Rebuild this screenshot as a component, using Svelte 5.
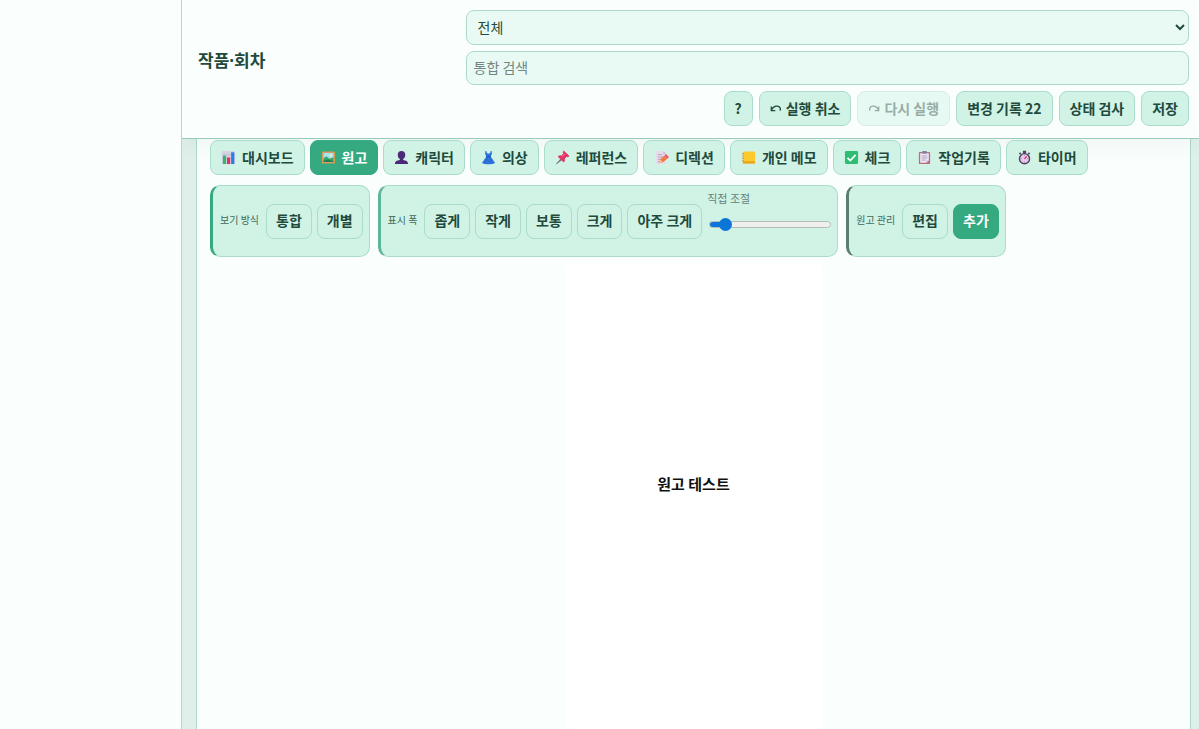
<script lang="ts">
  let work = $state('all')
  let query = $state('')
  let activeTab = $state('manuscript')
  let zoom = $state(8)

  const tabs = [
    { id: 'dashboard', label: '대시보드' },
    { id: 'manuscript', label: '원고' },
    { id: 'character', label: '캐릭터' },
    { id: 'costume', label: '의상' },
    { id: 'reference', label: '레퍼런스' },
    { id: 'direction', label: '디렉션' },
    { id: 'memo', label: '개인 메모' },
    { id: 'check', label: '체크' },
    { id: 'log', label: '작업기록' },
    { id: 'timer', label: '타이머' }
  ]
  const sizes = ['좁게', '작게', '보통', '크게', '아주 크게']
</script>

{#snippet icon(id: string)}
  <svg class="icon" viewBox="0 0 16 16" aria-hidden="true">
    {#if id === 'dashboard'}
      <rect x="1" y="1" width="14" height="14" rx="1" fill="#d5d2e4" />
      <path d="M1 5h14M1 9h14" stroke="#b5b0ca" stroke-width=".6" />
      <rect x="2" y="6" width="3.4" height="9" fill="#35b56d" />
      <rect x="6.4" y="8" width="3.4" height="7" fill="#e5305f" />
      <rect x="10.8" y="2.500" width="3.4" height="12.500" fill="#2a7fd8" />
    {:else if id === 'manuscript'}
      <rect x="1" y="1.500" width="14" height="13" rx="1" fill="#d99a52" />
      <rect x="2.6" y="3.1" width="10.8" height="9.8" fill="#a5e3f2" />
      <circle cx="10.5" cy="5.6" r="1.2" fill="#fff3a0" />
      <path d="M2.6 9l3-2.4L9 9.2l4.4-1.4v5.1H2.6z" fill="#35a866" />
      <path d="M2.6 11.5l5-1.5 5.8 2v.9H2.6z" fill="#1f7f54" />
    {:else if id === 'character'}
      <path d="M8 1c2.6 0 4 1.7 4 4.2 0 2-.9 3.5-2.2 4.3v1.1c3 .4 5.200 1.3 5.200 4.400H1c0-3.100 2.200-4 5.200-4.400V9.500C4.900 8.700 4 7.200 4 5.200 4 2.700 5.400 1 8 1z" fill="#4b2a78" />
    {:else if id === 'costume'}
      <path d="M4.600 1l1 .1.700 2.200 1.700.8 1.700-.8.700-2.200 1-.1.200 3.300-1.300 2.500 4.700 7c-1.200 1-4.500 1.500-7 1.500s-5.800-.5-7-1.500l4.700-7-1.300-2.500z" fill="#2f74dc" />
      <path d="M5.600 7h4.800" stroke="#174da5" />
      <path d="M6.500 8l-2 6M9.500 8l2 6" stroke="#2561c4" stroke-width=".7" />
    {:else if id === 'reference'}
      <path d="M6.400 9.200L1.200 15l6.300-4.600z" fill="#6d6677" stroke="#6d6677" stroke-width=".6" />
      <path d="M9.300 1l5.700 5.500c-.9.900-1.900.8-2.600.4l-2.200 2.300c.3 1.500 0 2.800-.9 3.500L3.200 7c.9-.9 2.300-1 3.700-.7l2.200-2.400C8.600 3 8.500 1.900 9.300 1z" fill="#e33264" stroke="#e33264" stroke-width=".8" />
      <path d="M8 7l2.500-2.500" stroke="#ff7d9d" />
    {:else if id === 'direction'}
      <path d="M2 1h8l3 3v11H2z" fill="#e8dcec" />
      <path d="M10 1v3h3" fill="#c6b7d1" />
      <path d="M4 5h5M4 7.500h6M4 10h4M4 12.500h4" stroke="#a691b8" stroke-width=".8" />
      <path d="M5.500 14l1-4 5-4.500L14.500 9l-5 4z" fill="#f27a42" />
      <path d="M11.500 5.500l1.300-1.200 3 3.400-1.300 1.300z" fill="#e5466c" />
      <path d="M5.500 14l1-4 3 3z" fill="#ffc28a" />
    {:else if id === 'memo'}
      <rect x="2" y="1.500" width="13" height="13" rx="1" fill="#fcca2c" />
      <path d="M2 12h13v1.500a1 1 0 0 1-1 1H3a1 1 0 0 1-1-1z" fill="#e6a41c" />
      <path d="M1 4h2M1 6.500h2M1 9h2M1 11.500h2" stroke="#a8844c" stroke-width=".8" />
    {:else if id === 'check'}
      <rect x="1" y="1" width="14" height="14" rx="1.500" fill="#2fbd73" />
      <path d="M3.700 8.300l3 3 5.700-6" fill="none" stroke="#fff" stroke-width="1.900" />
    {:else if id === 'log'}
      <rect x="2" y="2" width="12" height="13" rx="1" fill="#b66f83" />
      <path d="M3.400 3.500h9.200v7.700l-2.700 2.500H3.400z" fill="#efe7f4" />
      <rect x="5.500" y="1" width="5" height="3" rx=".7" fill="#8b829b" />
      <path d="M5 6.300h6M5 8.500h6M5 10.700h4" stroke="#9a85af" stroke-width=".8" />
      <path d="M9.900 13.700v-2.500h2.700z" fill="#c7b6d4" />
    {:else}
      <path d="M6.300.8h3.400v3H6.300zM11.400 3.800l1.300-1.300 1.300 1.300-1.300 1.300zM2 3.800l1.300-1.300 1.300 1.300-1.300 1.300z" fill="#51425f" />
      <circle cx="8" cy="9.300" r="5.400" fill="#e6c9ef" stroke="#51425f" stroke-width="1.500" />
      <path d="M8 9.300l2.500-2.500" stroke="#d62f5b" stroke-width="1.300" />
      <path d="M8 5.200v1M8 12.500v1M3.900 9.300h1M11.100 9.300h1" stroke="#79658a" stroke-width=".7" />
    {/if}
  </svg>
{/snippet}

{#snippet arrow(flip: boolean)}
  <svg class="arrow" class:flip viewBox="0 0 12 12" aria-hidden="true">
    <path d="M2 7.500C3.200 3.800 8.800 2.800 10.300 6.200c.4 1 .1 1.700-.6 2.300" fill="none" stroke="currentColor" stroke-width="1.300" />
    <path d="M1.300 4.600v4h4" fill="none" stroke="currentColor" stroke-width="1.300" />
  </svg>
{/snippet}

<div class="app">
  <aside class="sidebar"></aside>
  <div class="workspace">
    <header class="topbar">
      <h1>작품·회차</h1>
      <div class="controls">
        <select aria-label="작품 선택" bind:value={work}>
          <option value="all">전체</option>
        </select>
        <input type="search" placeholder="통합 검색" aria-label="통합 검색" bind:value={query} />
        <div class="actions">
          <button>?</button>
          <button>{@render arrow(false)}실행 취소</button>
          <button disabled>{@render arrow(true)}다시 실행</button>
          <button>변경 기록 22</button>
          <button>상태 검사</button>
          <button>저장</button>
        </div>
      </div>
    </header>

    <main class="panel">
      <nav class="tabs">
        {#each tabs as tab}
          <button class:active={activeTab === tab.id} onclick={() => (activeTab = tab.id)}>
            {@render icon(tab.id)}{tab.label}
          </button>
        {/each}
      </nav>

      <div class="toolbar">
        <section class="group view">
          <span class="name">보기 방식</span>
          <button>통합</button>
          <button>개별</button>
        </section>
        <section class="group width">
          <span class="name">표시 폭</span>
          {#each sizes as size}
            <button>{size}</button>
          {/each}
          <label class="slider">
            직접 조절
            <input type="range" min="0" max="100" bind:value={zoom} style="--fill: {zoom}%" />
          </label>
        </section>
        <section class="group manage">
          <span class="name">원고 관리</span>
          <button>편집</button>
          <button class="active">추가</button>
        </section>
      </div>

      <article class="page">
        <p>원고 테스트</p>
      </article>
    </main>
  </div>
</div>

<style>
  :global(body) {
    margin: 0;
    background: #fafffe;
  }

  .app {
    display: flex;
    min-height: 100vh;
    color: #1f4a3c;
    font: 14px/20px "Noto Sans CJK KR", sans-serif;
  }

  .app * {
    box-sizing: border-box;
  }

  .sidebar {
    position: relative;
    z-index: 1;
    flex: 0 0 182px;
    border-right: 1px solid #b4d8cc;
    background: #fafffe;
  }

  .workspace {
    flex: 1;
    min-width: 0;
    display: flex;
    flex-direction: column;
    background: #dff0ea;
  }

  .topbar {
    position: relative;
    display: grid;
    grid-template-columns: 27% 1fr;
    align-items: center;
    padding: 10px 10px 12px 16px;
    background: #fafffe;
    border-bottom: 1px solid #98cbbb;
    box-shadow: 0 6px 20px rgba(20, 60, 45, 0.05);
  }

  h1 {
    margin: 0;
    padding-bottom: 14px;
    font-family: "Noto Sans", "Noto Sans CJK KR", sans-serif;
    font-size: 17px;
    line-height: 24px;
  }

  .controls {
    display: grid;
    gap: 6px;
    min-width: 0;
  }

  select,
  input[type='search'] {
    width: 100%;
    height: 35px;
    margin: 0;
    padding: 0 7px 2px;
    border: 1px solid #add9cb;
    border-radius: 8px;
    background: #e9faf5;
    color: #1f4a3c;
    font: inherit;
    outline: none;
  }

  input[type='search'] {
    height: 34px;
    -webkit-appearance: none;
    appearance: none;
  }

  input::placeholder {
    color: #74857f;
  }

  .actions {
    display: flex;
    flex-wrap: wrap;
    justify-content: flex-end;
    gap: 6px;
  }

  button {
    display: inline-flex;
    align-items: center;
    justify-content: center;
    min-height: 35px;
    padding: 0 10px 2px;
    border: 1px solid #a9dccb;
    border-radius: 8px;
    background: #d0f3e6;
    color: #1f4a3c;
    font: inherit;
    font-weight: 700;
    white-space: nowrap;
  }

  button:disabled {
    opacity: 0.45;
  }

  button.active {
    border-color: #35a980;
    background: #35a980;
    color: #fff;
  }

  .arrow {
    width: 12px;
    height: 12px;
    margin-right: 4px;
  }

  .arrow.flip {
    transform: scaleX(-1);
  }

  .panel {
    flex: 1;
    display: flex;
    flex-direction: column;
    margin: 0 8px 0 14px;
    padding: 1px 13px 0;
    border: 1px solid #add9cb;
    border-width: 0 1px;
    background: #fafffe;
  }

  .tabs {
    display: flex;
    flex-wrap: wrap;
    gap: 5px;
    position: relative;
  }

  .icon {
    width: 15px;
    height: 15px;
    margin: 2px 6px 0 0;
  }

  .toolbar {
    display: flex;
    flex-wrap: wrap;
    gap: 8px;
    margin-top: 10px;
  }

  .group {
    display: flex;
    align-items: center;
    gap: 5px;
    min-height: 72px;
    padding: 6px;
    border: 1px solid #a9dccb;
    border-left: 3px solid #35a980;
    border-radius: 10px;
    background: #d0f3e6;
  }

  .group.width {
    border-left-color: #5cb698;
  }

  .group.manage {
    border-left-color: #5a7f72;
  }

  .group button {
    padding: 0 9px 2px;
  }

  .name {
    margin: 0 2px 2px 1px;
    color: #43695c;
    font-size: 10px;
  }

  .slider {
    display: flex;
    flex-direction: column;
    align-self: flex-start;
    gap: 14px;
    color: #638277;
    font-size: 11px;
    line-height: 12px;
  }

  input[type='range'] {
    -webkit-appearance: none;
    appearance: none;
    width: 122px;
    height: 13px;
    margin: 0 0 0 2px;
    background: none;
  }

  input[type='range']::-webkit-slider-runnable-track {
    height: 7px;
    border: 1px solid #b5bdb9;
    border-radius: 4px;
    background: linear-gradient(to right, #0b75d8 var(--fill), #efefef var(--fill));
  }

  input[type='range']::-webkit-slider-thumb {
    -webkit-appearance: none;
    width: 13px;
    height: 13px;
    margin-top: -4px;
    border-radius: 50%;
    background: #0b75d8;
  }

  .page {
    flex: 1;
    display: flex;
    justify-content: center;
    align-self: center;
    width: 26%;
    min-width: 257px;
    min-height: 460px;
    margin-top: 8px;
    padding-top: 209px;
    background: #fff;
  }

  .page p {
    margin: 0;
    color: #111;
    font-size: 15px;
    font-weight: 700;
  }
</style>
